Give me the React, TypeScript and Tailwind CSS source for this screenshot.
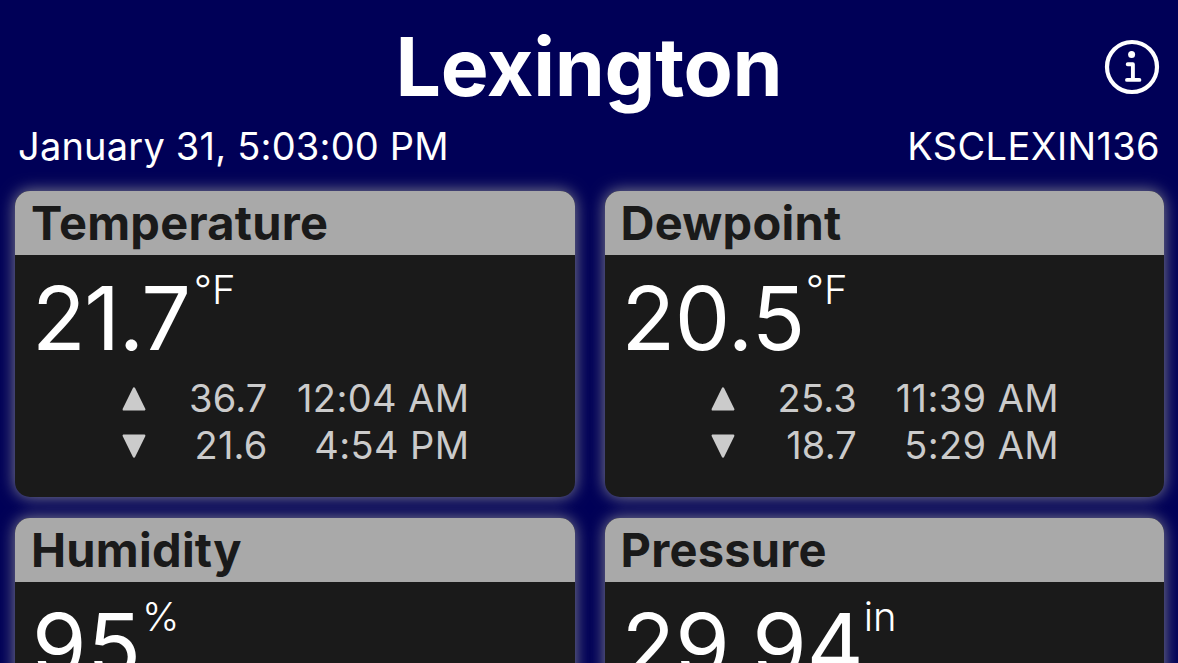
type Reading = {
  value: string;
  time: string;
};

type CardProps = {
  title: string;
  value: string;
  unit: string;
  tracking?: string;
  high?: Reading;
  low?: Reading;
};

const cards: CardProps[] = [
  {
    title: "Temperature",
    value: "21.7",
    unit: "°F",
    tracking: "tracking-[-1.4px] mr-[4px]",
    high: { value: "36.7", time: "12:04 AM" },
    low: { value: "21.6", time: "4:54 PM" },
  },
  {
    title: "Dewpoint",
    value: "20.5",
    unit: "°F",
    tracking: "tracking-[-0.3px] mr-px",
    high: { value: "25.3", time: "11:39 AM" },
    low: { value: "18.7", time: "5:29 AM" },
  },
  {
    title: "Humidity",
    value: "95",
    unit: "%",
    tracking: "tracking-[1px]",
  },
  { title: "Pressure", value: "29.94", unit: "in" },
];

function InfoIcon() {
  return (
    <svg width="56" height="56" viewBox="0 0 56 56" fill="none" stroke="white">
      <circle cx="28" cy="28" r="25" strokeWidth="4.2" />
      <circle cx="27.6" cy="15.4" r="3.5" fill="white" stroke="none" />
      <path
        d="M23.7 25.2h5.2v15.7M23 40.9h12.4"
        strokeWidth="3.9"
        strokeLinecap="round"
        strokeLinejoin="round"
      />
    </svg>
  );
}

function Triangle({ down }: { down?: boolean }) {
  return (
    <svg
      width="24"
      height="24"
      viewBox="0 0 24 24"
      className={down ? "rotate-180" : ""}
    >
      <path
        d="M12 1.6L22.2 22.4H1.8z"
        fill="#cbcbcb"
        stroke="#cbcbcb"
        strokeWidth="2.4"
        strokeLinejoin="round"
      />
    </svg>
  );
}

function ReadingRow({ reading, down }: { reading: Reading; down?: boolean }) {
  return (
    <div className="flex h-[47px] items-center text-[38px] leading-[47px] text-[#cbcbcb]">
      <Triangle down={down} />
      <span className="w-[122px] text-right tracking-[0.2px]">
        {reading.value}
      </span>
      <span className="w-[202px] text-right tracking-[0.4px]">
        {reading.time}
      </span>
    </div>
  );
}

function Card({ title, value, unit, tracking, high, low }: CardProps) {
  return (
    <section className="h-[306px] overflow-hidden rounded-[15px] bg-[#1a1a1a] shadow-[0_0_16px_#888890]">
      <h2 className="h-16 bg-[#a9a9a9] pl-4 text-[47px] leading-[64px] font-bold tracking-[0.25px] text-[#1a1a1a]">
        {title}
      </h2>
      <div className="flex h-[120px] pl-[17px]">
        <span className={`text-[88px] leading-[127px] ${tracking ?? ""}`}>
          {value}
        </span>
        <span className="text-[40px] leading-[69px] font-light">{unit}</span>
      </div>
      <div className="pl-[106.5px]">
        {high && <ReadingRow reading={high} />}
        {low && <ReadingRow reading={low} down />}
      </div>
    </section>
  );
}

export default function App() {
  return (
    <main className="h-[663px] w-[1178px] overflow-hidden bg-[#000057] font-['Inter',sans-serif] text-white">
      <header className="grid h-[132px] grid-cols-[1fr_auto_1fr] items-center px-[18px]">
        <h1 className="col-start-2 pt-px text-[80.5px] leading-[132px] font-bold tracking-[-0.3px]">
          Lexington
        </h1>
        <button className="mt-px justify-self-end">
          <InfoIcon />
        </button>
      </header>
      <div className="flex h-[29px] items-center justify-between px-[18px] text-[38px] leading-[29px]">
        <span className="tracking-[0.2px]">January 31, 5:03:00 PM</span>
        <span className="tracking-[0.35px]">KSCLEXIN136</span>
      </div>
      <div className="mt-[30px] grid grid-cols-2 gap-x-[30px] gap-y-[21px] pr-[14px] pl-[15px]">
        {cards.map((card) => (
          <Card key={card.title} {...card} />
        ))}
      </div>
    </main>
  );
}
